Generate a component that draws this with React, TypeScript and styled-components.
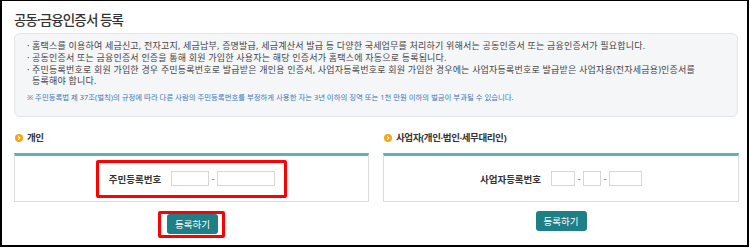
import styled, { createGlobalStyle } from "styled-components";

const GlobalStyle = createGlobalStyle`
  html, body {
    margin: 0;
    padding: 0;
    background: #fff;
  }
  body {
    font-family: "Noto Sans", "Noto Sans CJK KR", sans-serif;
    color: #333;
  }
`;

const notices = [
  "홈택스를 이용하여 세금신고, 전자고지, 세금납부, 증명발급, 세금계산서 발급 등 다양한 국세업무를 처리하기 위해서는 공동인증서 또는 금융인증서가 필요합니다.",
  "공동인증서 또는 금융인증서 인증을 통해 회원 가입한 사용자는 해당 인증서가 홈택스에 자동으로 등록됩니다.",
];

function App() {
  return (
    <>
      <GlobalStyle />
      <Frame>
        <Title>공동·금융인증서 등록</Title>
        <InfoBox>
          <NoticeList>
            {notices.map((text) => (
              <li key={text}>{text}</li>
            ))}
            <li>
              주민등록번호로 회원 가입한 경우 주민등록번호로 발급받은 개인용 인증서, 사업자등록번호로 회원 가입한 경우에는
              사업자등록번호로 발급받은 사업자용(전자세금용)인증서를
              <br />
              등록해야 합니다.
            </li>
          </NoticeList>
          <Warning>
            ※ 주민등록법 제 37조(벌칙)의 규정에 따라 다른 사람의 주민등록번호를 부정하게 사용한 자는 3년 이하의 징역 또는 1천
            만원 이하의 벌금이 부과될 수 있습니다.
          </Warning>
        </InfoBox>
        <Columns>
          <Section>
            <SectionTitle>
              <Bullet />
              개인
            </SectionTitle>
            <Panel>
              <Highlight $pad="0 9px 0 10px">
                <FieldRow>
                  <FieldLabel>주민등록번호</FieldLabel>
                  <Inputs>
                    <NumInput $w={38} />
                    <Dash>-</Dash>
                    <NumInput $w={58} />
                  </Inputs>
                </FieldRow>
              </Highlight>
            </Panel>
            <Actions>
              <Highlight $pad="0 4px 1px 6px">
                <Button>등록하기</Button>
              </Highlight>
            </Actions>
          </Section>
          <Section>
            <SectionTitle>
              <Bullet />
              사업자(개인·법인·세무대리인)
            </SectionTitle>
            <Panel>
              <FieldRow>
                <FieldLabel>사업자등록번호</FieldLabel>
                <Inputs>
                  <NumInput $w={24} />
                  <Dash>-</Dash>
                  <NumInput $w={18} />
                  <Dash>-</Dash>
                  <NumInput $w={33} />
                </Inputs>
              </FieldRow>
            </Panel>
            <Actions>
              <Button>등록하기</Button>
            </Actions>
          </Section>
        </Columns>
      </Frame>
    </>
  );
}

function Bullet() {
  return (
    <Icon viewBox="0 0 10 10" aria-hidden>
      <circle cx="5" cy="5" r="5" fill="#f2a818" />
      <path d="M4 3 L6 5 L4 7" fill="none" stroke="#fff" strokeWidth="1.3" />
    </Icon>
  );
}

const Frame = styled.div`
  box-sizing: border-box;
  width: 749px;
  height: 247px;
  border: 2px solid #000;
  border-top-width: 1px;
  padding: 10px 9px 0 12px;
`;

const Title = styled.h2`
  margin: 0 0 4px;
  font-size: 13.5px;
  line-height: 18px;
  font-weight: 500;
  color: #333;
  letter-spacing: -0.9px;
`;

const InfoBox = styled.div`
  box-sizing: border-box;
  height: 84px;
  border: 1px solid #e3e5e8;
  border-radius: 6px;
  background: #f5f6f8;
  padding: 6px 10px 0 12px;
`;

const NoticeList = styled.ul`
  margin: 0;
  padding: 0;
  list-style: none;
  font-size: 9px;
  line-height: 11.8px;
  letter-spacing: 0.2px;
  color: #444;

  li {
    position: relative;
    padding-left: 5px;
  }
  li::before {
    content: "·";
    position: absolute;
    left: 0;
  }
`;

const Warning = styled.p`
  margin: 5px 0 0;
  font-size: 7.4px;
  line-height: 10px;
  color: #3d77b5;
`;

const Columns = styled.div`
  display: grid;
  grid-template-columns: 355px 356px;
  gap: 14px;
  margin-top: 14px;
`;

const Section = styled.section`
  display: flex;
  flex-direction: column;
`;

const SectionTitle = styled.h3`
  display: flex;
  align-items: center;
  gap: 4px;
  margin: 0 0 9px 1px;
  font-size: 9.5px;
  line-height: 13px;
  font-weight: 700;
  letter-spacing: -0.4px;
  color: #333;
`;

const Icon = styled.svg`
  width: 8px;
  height: 8px;
  flex: none;
`;

const Panel = styled.div`
  box-sizing: border-box;
  height: 49px;
  border: 1px solid #dcdcdc;
  border-top: 3px solid #5fb1b3;
  display: flex;
  align-items: center;
  justify-content: center;
`;

const Highlight = styled.div<{ $pad: string }>`
  border: 3px solid #f00;
  border-radius: 2px;
  padding: ${(p) => p.$pad};
  display: flex;
  align-items: center;
`;

const FieldRow = styled.div`
  display: flex;
  align-items: center;
  gap: 10px;
  height: 32px;
`;

const FieldLabel = styled.span`
  font-size: 9.5px;
  font-weight: 700;
  color: #333;
`;

const Inputs = styled.div`
  display: flex;
  align-items: center;
`;

const NumInput = styled.input<{ $w: number }>`
  box-sizing: border-box;
  width: ${(p) => p.$w}px;
  height: 15px;
  border: 1px solid #d6d6d6;
  padding: 0;
  background: #fff;
`;

const Dash = styled.span`
  width: 8px;
  text-align: center;
  font-size: 9px;
  color: #555;
`;

const Actions = styled.div`
  display: flex;
  justify-content: center;
  margin-top: 9px;
`;

const Button = styled.button`
  width: 51px;
  height: 20px;
  border: none;
  border-radius: 3px;
  background: #1f7f87;
  color: #fff;
  font-family: inherit;
  font-size: 9.5px;
  padding: 0;
  cursor: pointer;
`;

export default App;
